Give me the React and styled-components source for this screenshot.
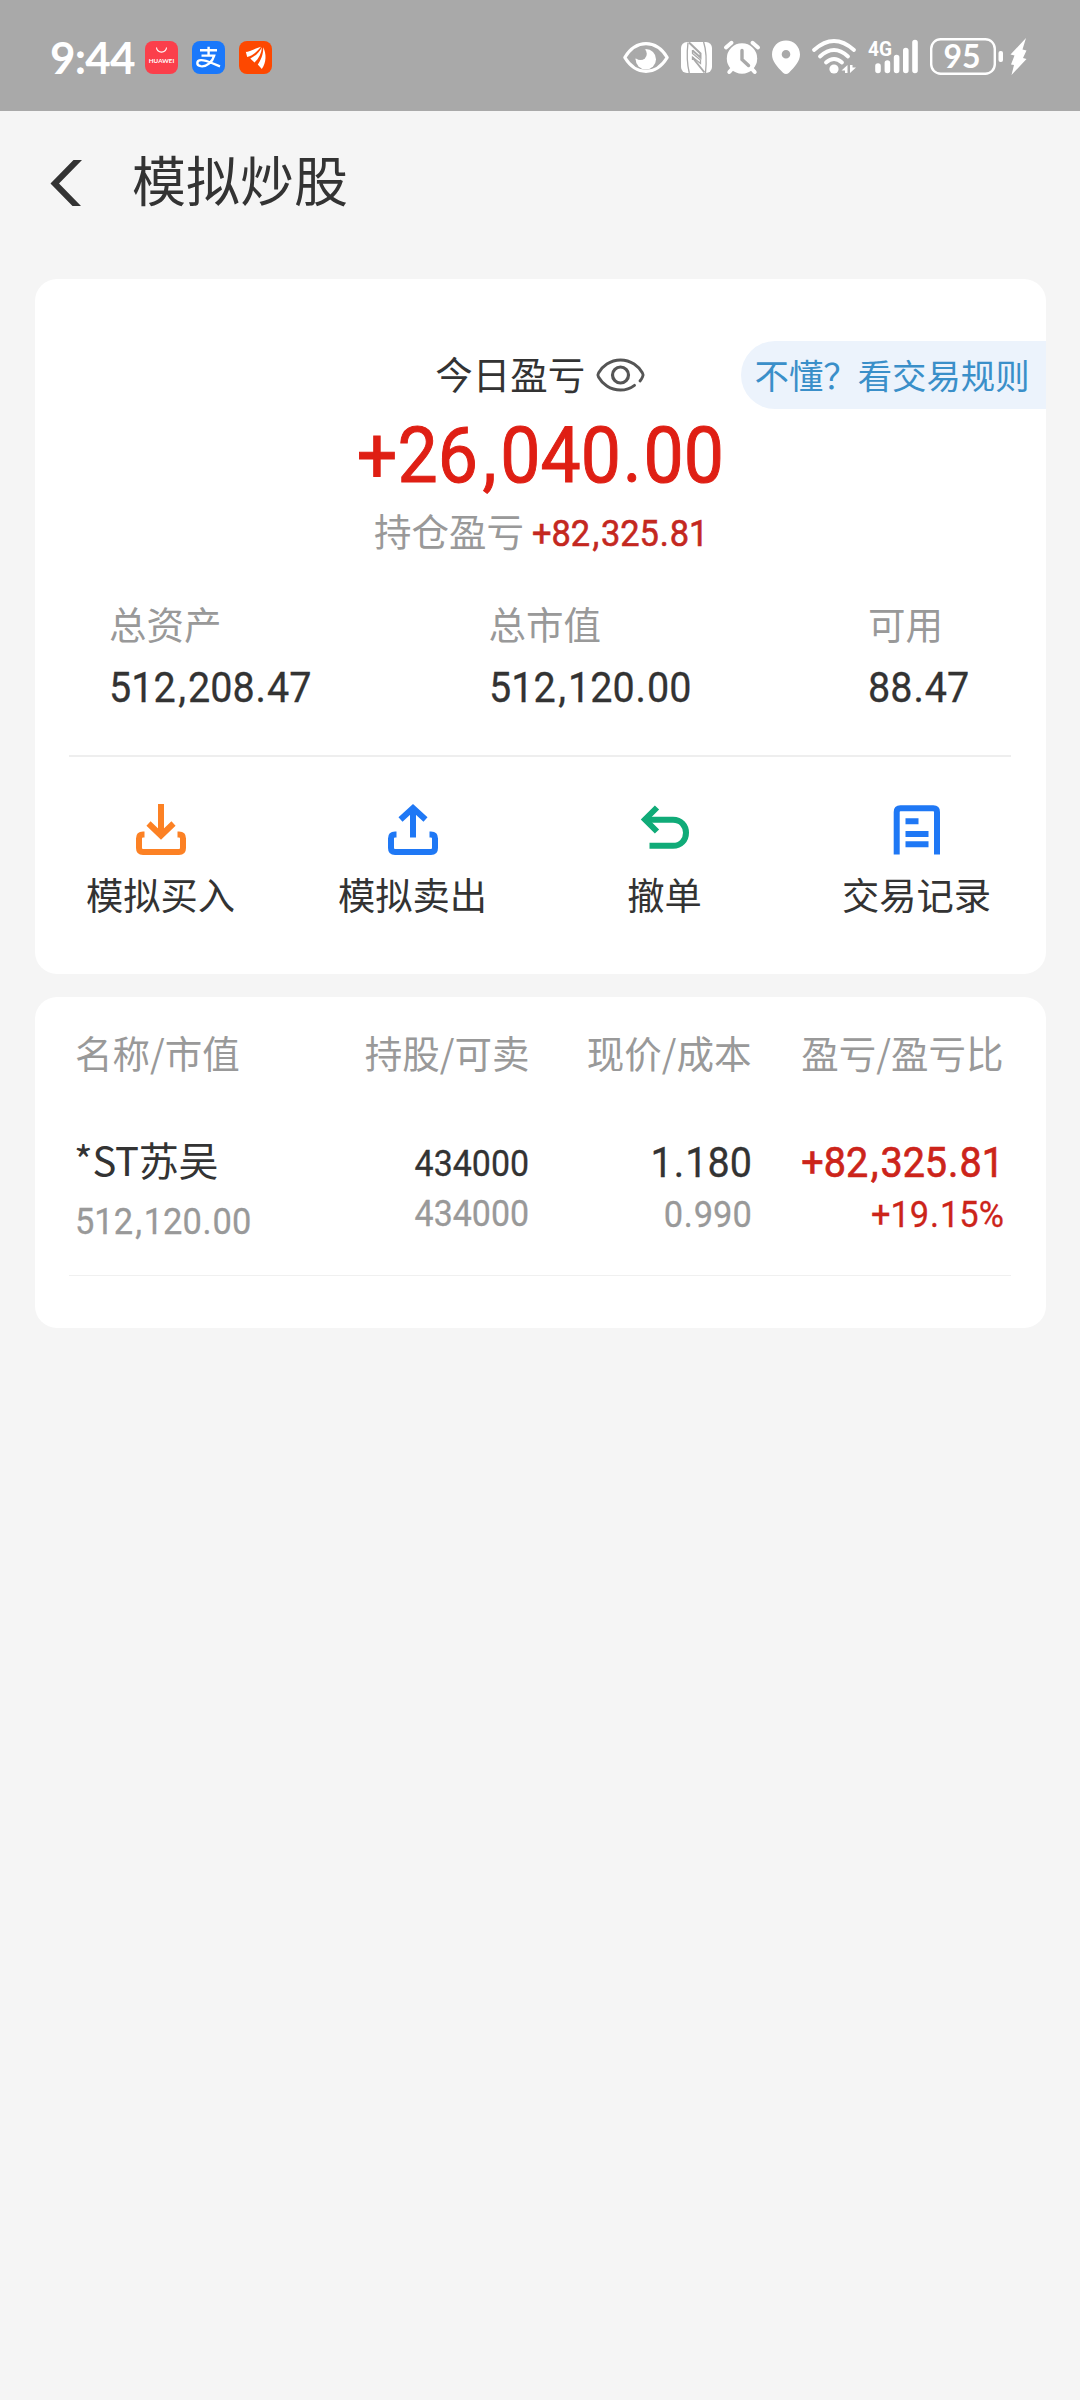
import React from "react";
import styled, { createGlobalStyle } from "styled-components";

const cjk = '"Noto Sans CJK SC", "Noto Sans", sans-serif';
const digits = 'Roboto, "Noto Sans CJK SC", sans-serif';
const ink = "#333333";
const muted = "#999999";

const GlobalStyle = createGlobalStyle`
  body { margin: 0; background: #f5f5f5; }
  * { box-sizing: border-box; }
  svg { display: block; flex: none; overflow: visible; }
`;

const Screen = styled.main`
  width: 1080px;
  min-height: 2400px;
  background: #f5f5f5;
  color: ${ink};
  font-family: ${cjk};
`;

const StatusBar = styled.header`
  display: flex;
  justify-content: space-between;
  height: 111px;
  padding: 38px 53px 36px 50px;
  background: #a9a9a9;
  color: #fff;
`;

const StatusGroup = styled.div`
  display: flex;
  gap: ${(p) => p.$gap}px;
`;

const Clock = styled.span`
  width: 81px;
  font: 700 44px/39px Lato, sans-serif;
  letter-spacing: -0.8px;
  white-space: nowrap;
`;

const TitleBar = styled.div`
  display: flex;
  align-items: center;
  gap: 50px;
  height: 134px;
  margin-bottom: 34px;
  padding-left: 50px;
`;

const BackIcon = styled.svg`
  margin-top: 10px;
`;

const Title = styled.h1`
  margin: 2px 0 0;
  font-size: 54px;
  font-weight: 400;
  line-height: 70px;
`;

const Card = styled.section`
  width: 1010.5px;
  height: ${(p) => p.$height}px;
  margin: 0 0 23px 35px;
  padding-top: ${(p) => p.$top}px;
  border-radius: 22px;
  background: #fff;
`;

const TodayRow = styled.div`
  display: grid;
  grid-template-columns: 1fr auto 1fr;
  align-items: center;
  height: 68px;
`;

const TodayLabel = styled.div`
  grid-column: 2;
  display: flex;
  align-items: center;
  gap: 11px;
  font-size: 37.5px;
  line-height: 50px;
  padding-bottom: 4px;

  svg { margin-top: 4px; }
`;

const RulesPill = styled.a`
  justify-self: end;
  width: 305px;
  height: 68px;
  padding-left: 14px;
  border-radius: 34px 0 0 34px;
  background: #ecf3fc;
  color: #3a8fc9;
  font-size: 34.4px;
  line-height: 66px;
  white-space: nowrap;
`;

const Number = styled.span`
  display: block;
  color: ${(p) => p.$color || ink};
  font-family: ${digits};
  font-size: ${(p) => p.$size}px;
  font-weight: 400;
  line-height: ${(p) => p.$line || 50}px;
  white-space: nowrap;
  transform: scaleX(0.93);
  transform-origin: ${(p) => p.$origin || "left"} center;
  -webkit-text-stroke: ${(p) => p.$stroke || 0.3}px currentColor;
`;

const Mark = styled.span`
  margin: ${(p) => (p.$comma ? "0 0.05em 0 0.065em" : "0 0.025em")};
`;

function Figure({ value, ...rest }) {
  return (
    <Number {...rest}>
      {value.split(/([,.])/).map((part, i) =>
        i % 2 ? <Mark key={i} $comma={part === ","}>{part}</Mark> : part
      )}
    </Number>
  );
}

const TodayAmount = styled.div`
  display: flex;
  justify-content: center;
  margin-top: 2px;
`;

const HoldingRow = styled.div`
  display: flex;
  align-items: baseline;
  gap: 8px;
  height: 54px;
  margin-top: 4px;
  padding-left: 339px;
  color: ${muted};
  font-size: 37.5px;
  line-height: 50px;
`;

const Stats = styled.div`
  display: grid;
  grid-template-columns: 379.5px 379.5px 1fr;
  margin: 39px 0 42px;
  padding-left: 74px;
`;

const StatLabel = styled.div`
  margin-bottom: 15px;
  color: ${muted};
  font-size: 37.5px;
  line-height: 50px;
`;

const Divider = styled.hr`
  height: ${(p) => p.$size}px;
  margin: 0 35px 0 34px;
  border: 0;
  background: ${(p) => p.$color};
`;

const Actions = styled.nav`
  display: grid;
  grid-template-columns: repeat(4, 252px);
  padding-top: 47px;
`;

const Action = styled.a`
  display: flex;
  flex-direction: column;
  align-items: center;
  gap: 19px;
  margin-left: -1px;
  font-size: 37.3px;
  line-height: 40px;
`;

const tableColumns = `
  display: grid;
  grid-template-columns: 200px 254.5px 222px 252px;
  padding-left: 40px;
`;

const TableHead = styled.div`
  ${tableColumns}
  margin-bottom: 56px;
  color: ${muted};
  font-size: 37.5px;
  line-height: 50px;
  white-space: nowrap;
`;

const HeadCell = styled.div`
  text-align: ${(p) => (p.$start ? "left" : "right")};
`;

const HoldingLine = styled.div`
  ${tableColumns}
  height: 142px;
`;

const Cell = styled.div`
  display: flex;
  flex-direction: column;
  align-items: ${(p) => (p.$start ? "flex-start" : "flex-end")};
  gap: ${(p) => p.$gap}px;
  padding-top: ${(p) => p.$top || 0}px;
`;

const StockName = styled.div`
  margin-left: -1px;
  font-size: 40px;
  line-height: 50px;
  letter-spacing: -0.3px;
  white-space: nowrap;
`;

function StoreBadge() {
  return (
    <svg width="33" height="37" viewBox="145 38 33 37">
      <rect x="145" y="41" width="33" height="33" rx="8" fill="#fb3f4b" />
      <path d="M156.5 47.5a5 4.6 0 0 0 10 0" fill="none" stroke="#fff" strokeWidth="1.1" />
      <text x="161.5" y="62.6" textAnchor="middle" textLength="25.5" lengthAdjust="spacingAndGlyphs" fontFamily="Lato, sans-serif" fontWeight="700" fontSize="6.4" fill="#fff">HUAWEI</text>
    </svg>
  );
}

function PayBadge() {
  return (
    <svg width="33" height="37" viewBox="192 38 33 37">
      <rect x="192" y="41" width="33" height="33" rx="8" fill="#1a78fb" />
      <g fill="none" stroke="#fff" strokeLinecap="butt">
        <path d="M200 50.2H217M208.6 46.8V56" strokeWidth="2.4" />
        <path d="M201.5 55.6H214.2C212.5 62 206.5 67 200.8 66.2C196 65.4 196.2 60.4 201 60.2C206.5 60 212 63.5 220 66.3" strokeWidth="2.3" />
      </g>
    </svg>
  );
}

function WingBadge() {
  return (
    <svg width="33" height="37" viewBox="239 38 33 37">
      <rect x="239" y="41" width="33" height="33" rx="8" fill="#fe4800" />
      <g fill="#fff">
        <path d="M261 46.8C254 48.5 249 52.500 245.800 51.800L247.200 57C252.500 55.500 257 52 261 46.800Z" />
        <path d="M262 47.200C259 53 254.500 56.500 250.300 58.500L254.500 62.500C259 58.500 261.500 53 262 47.200Z" />
        <path d="M263.200 47.200C263.500 54.500 260.500 60.500 257.800 64.500L261.800 69C266.500 62.500 266.500 53.500 263.200 47.200Z" />
      </g>
    </svg>
  );
}

function EyeStatus() {
  return (
    <svg width="46" height="37" viewBox="623 38 46 37">
      <path d="M624.800 57.500C630 49 637 43.700 646 43.700S662 49 667.200 57.500C662 66 655 71.300 646 71.300S630 66 624.800 57.500Z" fill="none" stroke="#fff" strokeWidth="3.200" strokeLinejoin="round" />
      <circle cx="645.800" cy="59.200" r="10.200" fill="#fff" />
      <circle cx="640.500" cy="53.700" r="6.300" fill="#a9a9a9" />
    </svg>
  );
}

function NfcStatus() {
  return (
    <svg width="31" height="37" viewBox="681 38 31 37">
      <rect x="681" y="42" width="31" height="31" rx="6" fill="#fff" />
      <path d="M688 42.500C687 51 687 64 689.300 73M705.500 73C706.500 63 706.300 50 703.600 42" fill="none" stroke="#a9a9a9" strokeWidth="1.300" />
      <path d="M689 42.500L700.500 53.500V57.500L692.500 50.500M692.500 57.500L704.500 72.500" fill="none" stroke="#a9a9a9" strokeWidth="2" />
      <path d="M692.500 50V53.500L700.500 60V63.500L692.500 57V60" fill="none" stroke="#a9a9a9" strokeWidth="1.300" />
    </svg>
  );
}

function AlarmStatus() {
  return (
    <svg width="36" height="37" viewBox="724 38 36 37">
      <circle cx="742" cy="58.500" r="15.200" fill="#fff" />
      <path d="M726 47.500L731.500 42.800M758 47.500L752.500 42.800M732 69L729.300 72M752 69L754.700 72" stroke="#fff" strokeWidth="4" strokeLinecap="round" />
      <path d="M742 50.500V59.500L748.500 65.500" fill="none" stroke="#a9a9a9" strokeWidth="3.400" strokeLinecap="round" />
    </svg>
  );
}

function PinStatus() {
  return (
    <svg width="28" height="37" viewBox="772 38 28 37">
      <path d="M786 40.500C778 40.500 772 46.700 772 54.500C772 61.500 777.500 67 783 72.700Q786 75.300 789 72.700C794.500 67 800 61.500 800 54.500C800 46.700 794 40.500 786 40.500ZM786 50A4.300 4.300 0 1 1 786 58.600A4.300 4.300 0 1 1 786 50Z" fill="#fff" fillRule="evenodd" />
    </svg>
  );
}

function WifiStatus() {
  return (
    <svg width="44" height="37" viewBox="812 38 44 37">
      <g fill="none" stroke="#fff" strokeWidth="3.800" strokeLinecap="round">
        <path d="M814 50Q824 41 834 41T854 50" />
        <path d="M820 56.500Q827 50 834 50T848 56.500" />
        <path d="M826 62.500Q830 59 834 59T842 62.500" />
      </g>
      <circle cx="834" cy="69" r="4.600" fill="#fff" />
      <path d="M847.500 65V73H845V70.500H841.500ZM850 65V73L856 67.500H852.500V65Z" fill="#fff" />
    </svg>
  );
}

function SignalStatus() {
  return (
    <svg width="50" height="37" viewBox="868 38 50 37">
      <text x="868" y="56" fontFamily="Roboto, sans-serif" fontWeight="700" fontSize="21" textLength="24" lengthAdjust="spacingAndGlyphs" fill="#fff">4G</text>
      <path d="M878 66V70.500M887.400 63V70.500M896.600 57.500V70.500M905.800 50.500V70.500M915 42.500V70.500" stroke="#fff" strokeWidth="5.600" strokeLinecap="round" />
    </svg>
  );
}

function BatteryStatus() {
  return (
    <svg width="97" height="37" viewBox="930 38 97 37">
      <rect x="931.200" y="39.200" width="63.600" height="34.600" rx="9.500" fill="none" stroke="#fff" strokeWidth="2.400" />
      <text x="962" y="68" textAnchor="middle" fontFamily="Lato, sans-serif" fontWeight="700" fontSize="32" fill="#fff">95</text>
      <rect x="998.500" y="51" width="4.500" height="11" rx="2" fill="#fff" />
      <path d="M1026 38L1010.500 54.500L1014.500 55.500L1011 64.500L1014 65L1011.500 75L1026.500 59L1023 58L1026.500 50.500L1022.500 49.500Z" fill="#fff" />
    </svg>
  );
}

function EyeIcon() {
  return (
    <svg width="49" height="36" viewBox="0 0 49 36" fill="none" stroke="#555" strokeWidth="2.900" strokeLinecap="round">
      <path d="M38.500 28.300C34.500 31.300 30 33 24.500 33C14 33 6 26.500 2.500 20Q1.300 18 2.500 16C6 9.500 14 3 24.500 3S43 9.500 46.500 16Q47.700 18 46.500 20Q45.500 22.200 44 24" strokeLinejoin="round" />
      <circle cx="24.500" cy="18" r="8" strokeWidth="3.200" />
    </svg>
  );
}

function BuyIcon() {
  return (
    <svg width="50" height="51" viewBox="0 0 50 51" fill="none" stroke="#fc8124" strokeWidth="6">
      <path d="M25 0V32" />
      <path d="M12.500 19.500L25 31.500L37.500 19.500" />
      <path d="M8.500 30.500H7Q3 30.500 3 34.500V44Q3 48 7 48H43Q47 48 47 44V34.500Q47 30.500 43 30.500H41.500" />
    </svg>
  );
}

function SellIcon() {
  return (
    <svg width="50" height="51" viewBox="0 0 50 51" fill="none" stroke="#1f78f5" strokeWidth="6">
      <path d="M25 33.500V3" />
      <path d="M12.500 15.500L25 4L37.500 15.500" />
      <path d="M8.500 30.500H7Q3 30.500 3 34.500V44Q3 48 7 48H43Q47 48 47 44V34.500Q47 30.500 43 30.500H41.500" />
    </svg>
  );
}

function CancelIcon() {
  return (
    <svg width="50" height="51" viewBox="0 0 50 51" fill="none" stroke="#10ab78" strokeWidth="6">
      <path d="M5 15.800H33C41 15.800 46 21.500 46 28.800S41 41.800 33 41.800H9.500" />
      <path d="M17 3.500L5 15.500L17 27.500" />
    </svg>
  );
}

function RecordIcon() {
  return (
    <svg width="50" height="51" viewBox="0 0 50 51" fill="none" stroke="#1f78f5" strokeWidth="6">
      <path d="M4.700 50.500V8Q4.700 4.300 8.400 4.300H41.300Q45 4.300 45 8V50.500" />
      <path d="M13.500 17.200H26.500M13.500 30H36.500M13.500 40.300H36.500" />
    </svg>
  );
}

const stats = [
  ["总资产", "512,208.47"],
  ["总市值", "512,120.00"],
  ["可用", "88.47"],
];

const actions = [
  ["模拟买入", BuyIcon],
  ["模拟卖出", SellIcon],
  ["撤单", CancelIcon],
  ["交易记录", RecordIcon],
];

const headings = ["名称/市值", "持股/可卖", "现价/成本", "盈亏/盈亏比"];

export default function App() {
  return (
    <Screen>
      <GlobalStyle />
      <StatusBar>
        <StatusGroup $gap={14}>
          <Clock>9:44</Clock>
          <StoreBadge />
          <PayBadge />
          <WingBadge />
        </StatusGroup>
        <StatusGroup $gap={12}>
          <EyeStatus />
          <NfcStatus />
          <AlarmStatus />
          <PinStatus />
          <WifiStatus />
          <SignalStatus />
          <BatteryStatus />
        </StatusGroup>
      </StatusBar>

      <TitleBar>
        <BackIcon width="32" height="46" viewBox="0 0 32 46">
          <path d="M23.500 0H32L9 23.500L31 46H22.500L0.500 23.500Z" fill={ink} />
        </BackIcon>
        <Title>模拟炒股</Title>
      </TitleBar>

      <Card $height={695} $top={62}>
        <TodayRow>
          <TodayLabel>
            今日盈亏
            <EyeIcon />
          </TodayLabel>
          <RulesPill>不懂？看交易规则</RulesPill>
        </TodayRow>
        <TodayAmount>
          <Figure value="+26,040.00" $size={77} $line={90} $stroke={1} $origin="center" $color="#df1f14" />
        </TodayAmount>
        <HoldingRow>
          持仓盈亏
          <Figure value="+82,325.81" $size={37} $stroke={0.6} $color="#c4281f" />
        </HoldingRow>
        <Stats>
          {stats.map(([label, value]) => (
            <div key={label}>
              <StatLabel>{label}</StatLabel>
              <Figure value={value} $size={42.5} />
            </div>
          ))}
        </Stats>
        <Divider $size={2} $color="#eeeeee" />
        <Actions>
          {actions.map(([label, Icon]) => (
            <Action key={label}>
              <Icon />
              {label}
            </Action>
          ))}
        </Actions>
      </Card>

      <Card $height={331} $top={30}>
        <TableHead>
          {headings.map((text, i) => (
            <HeadCell key={text} $start={i === 0}>{text}</HeadCell>
          ))}
        </TableHead>
        <HoldingLine>
          <Cell $start $gap={13} $top={1}>
            <StockName>*ST苏吴</StockName>
            <Figure value="512,120.00" $size={37} $color={muted} />
          </Cell>
          <Cell $gap={0} $top={6}>
            <Figure value="434000" $size={36.5} $origin="right" />
            <Figure value="434000" $size={36.5} $origin="right" $color={muted} />
          </Cell>
          <Cell $gap={2} $top={5}>
            <Figure value="1.180" $size={42.5} $origin="right" />
            <Figure value="0.990" $size={37} $origin="right" $color={muted} />
          </Cell>
          <Cell $gap={2} $top={5}>
            <Figure value="+82,325.81" $size={42.5} $stroke={0.7} $origin="right" $color="#cc241a" />
            <Figure value="+19.15%" $size={37} $origin="right" $color="#cc241a" />
          </Cell>
        </HoldingLine>
        <Divider $size={1} $color="#f0f0f0" />
      </Card>
    </Screen>
  );
}
